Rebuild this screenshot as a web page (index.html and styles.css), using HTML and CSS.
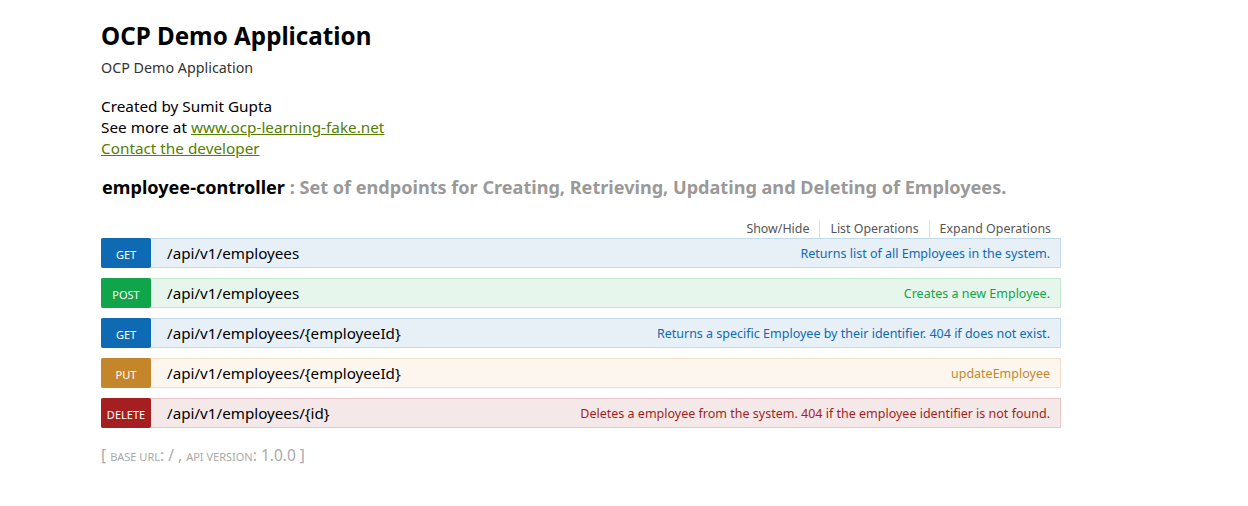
FILE: index.html
```html
<!DOCTYPE html>
<html>
<head>
<meta charset="utf-8">
<title>OCP Demo Application</title>
<link rel="stylesheet" href="styles.css">
</head>
<body>
<div class="wrap">
  <div class="info">
    <div class="info-title">OCP Demo Application</div>
    <div class="info-desc">OCP Demo Application</div>
    <div class="info-meta">
      <div>Created by Sumit Gupta</div>
      <div>See more at <a href="#">www.ocp-learning-fake.net</a></div>
      <div><a href="#">Contact the developer</a></div>
    </div>
  </div>

  <div class="resource">
    <h2 class="res-heading"><a href="#" class="res-name">employee-controller</a> : Set of endpoints for Creating, Retrieving, Updating and Deleting of Employees.</h2>
    <ul class="options">
      <li><a href="#">Show/Hide</a></li>
      <li><a href="#">List Operations</a></li>
      <li><a href="#">Expand Operations</a></li>
    </ul>
    <div class="ops">
      <div class="op op-get">
        <span class="method">GET</span>
        <span class="path">/api/v1/employees</span>
        <span class="summary">Returns list of all Employees in the system.</span>
      </div>
      <div class="op op-post">
        <span class="method">POST</span>
        <span class="path">/api/v1/employees</span>
        <span class="summary">Creates a new Employee.</span>
      </div>
      <div class="op op-get">
        <span class="method">GET</span>
        <span class="path">/api/v1/employees/{employeeId}</span>
        <span class="summary">Returns a specific Employee by their identifier. 404 if does not exist.</span>
      </div>
      <div class="op op-put">
        <span class="method">PUT</span>
        <span class="path">/api/v1/employees/{employeeId}</span>
        <span class="summary">updateEmployee</span>
      </div>
      <div class="op op-delete">
        <span class="method">DELETE</span>
        <span class="path">/api/v1/employees/{id}</span>
        <span class="summary">Deletes a employee from the system. 404 if the employee identifier is not found.</span>
      </div>
    </div>
  </div>

  <div class="footer">[ <span class="sc">base url</span>: / , <span class="sc">api version</span>: 1.0.0 ]</div>
</div>
</body>
</html>
```

FILE: styles.css
```css
html, body {
  margin: 0;
  padding: 0;
  background: #fff;
}
body {
  font-family: "Noto Sans", "Open Sans", "DejaVu Sans", sans-serif;
  color: #000;
}
.wrap {
  width: 960px;
  padding: 21px 0 0 101px;
}
.info-title {
  font-size: 24.2px;
  font-weight: bold;
  line-height: 30px;
}
.info-desc {
  margin-top: 7px;
  font-size: 14.3px;
  line-height: 20px;
  color: #333;
}
.info-meta {
  margin-top: 18px;
  font-size: 15.3px;
  line-height: 21px;
}
.info-meta a {
  color: #547f00;
  text-decoration: underline;
}
.res-heading {
  margin: 16px 0 0 1px;
  font-size: 18.1px;
  line-height: 24px;
  font-weight: bold;
  color: #999;
}
.res-name {
  color: #000;
  text-decoration: none;
}
.options {
  list-style: none;
  margin: 21px 0 0 0;
  padding: 0;
  display: flex;
  justify-content: flex-end;
  font-size: 12.4px;
  line-height: 18px;
}
.options li {
  padding: 0 10px;
  border-right: 1px solid #ddd;
}
.options li:last-child {
  border-right: none;
}
.options a {
  color: #555;
  text-decoration: none;
}
.ops {
  display: flex;
  flex-direction: column;
  gap: 10px;
}
.op {
  height: 30px;
  box-sizing: border-box;
  border: 1px solid;
  display: flex;
  align-items: center;
}
.method {
  align-self: stretch;
  width: 50px;
  margin: -1px 0 -1px -1px;
  border-radius: 2px;
  color: #fff;
  font-size: 11px;
  display: flex;
  align-items: center;
  justify-content: center;
  padding-top: 3px;
  box-sizing: border-box;
}
.path {
  margin-left: 16px;
  font-size: 15.2px;
  color: #000;
}
.summary {
  margin-left: auto;
  padding-right: 10px;
  font-size: 12.5px;
}
.op-get { background: #e7f0f7; border-color: #c3d9ec; }
.op-get .method { background: #0f6ab4; }
.op-get .summary { color: #0f6ab4; }
.op-post { background: #e7f6ec; border-color: #c3e8d1; }
.op-post .method { background: #10a54a; }
.op-post .summary { color: #10a54a; }
.op-put { background: #fcf6ef; border-color: #f0e0ca; }
.op-put .method { background: #c5862b; }
.op-put .summary { color: #c5862b; }
.op-delete { background: #f5e8e8; border-color: #e8c6c7; }
.op-delete .method { background: #a41e22; }
.op-delete .summary { color: #a41e22; }
.footer {
  margin-top: 17px;
  font-size: 15.5px;
  line-height: 20px;
  color: #aaa;
}
.sc {
  text-transform: uppercase;
  font-size: 11px;
}
```
